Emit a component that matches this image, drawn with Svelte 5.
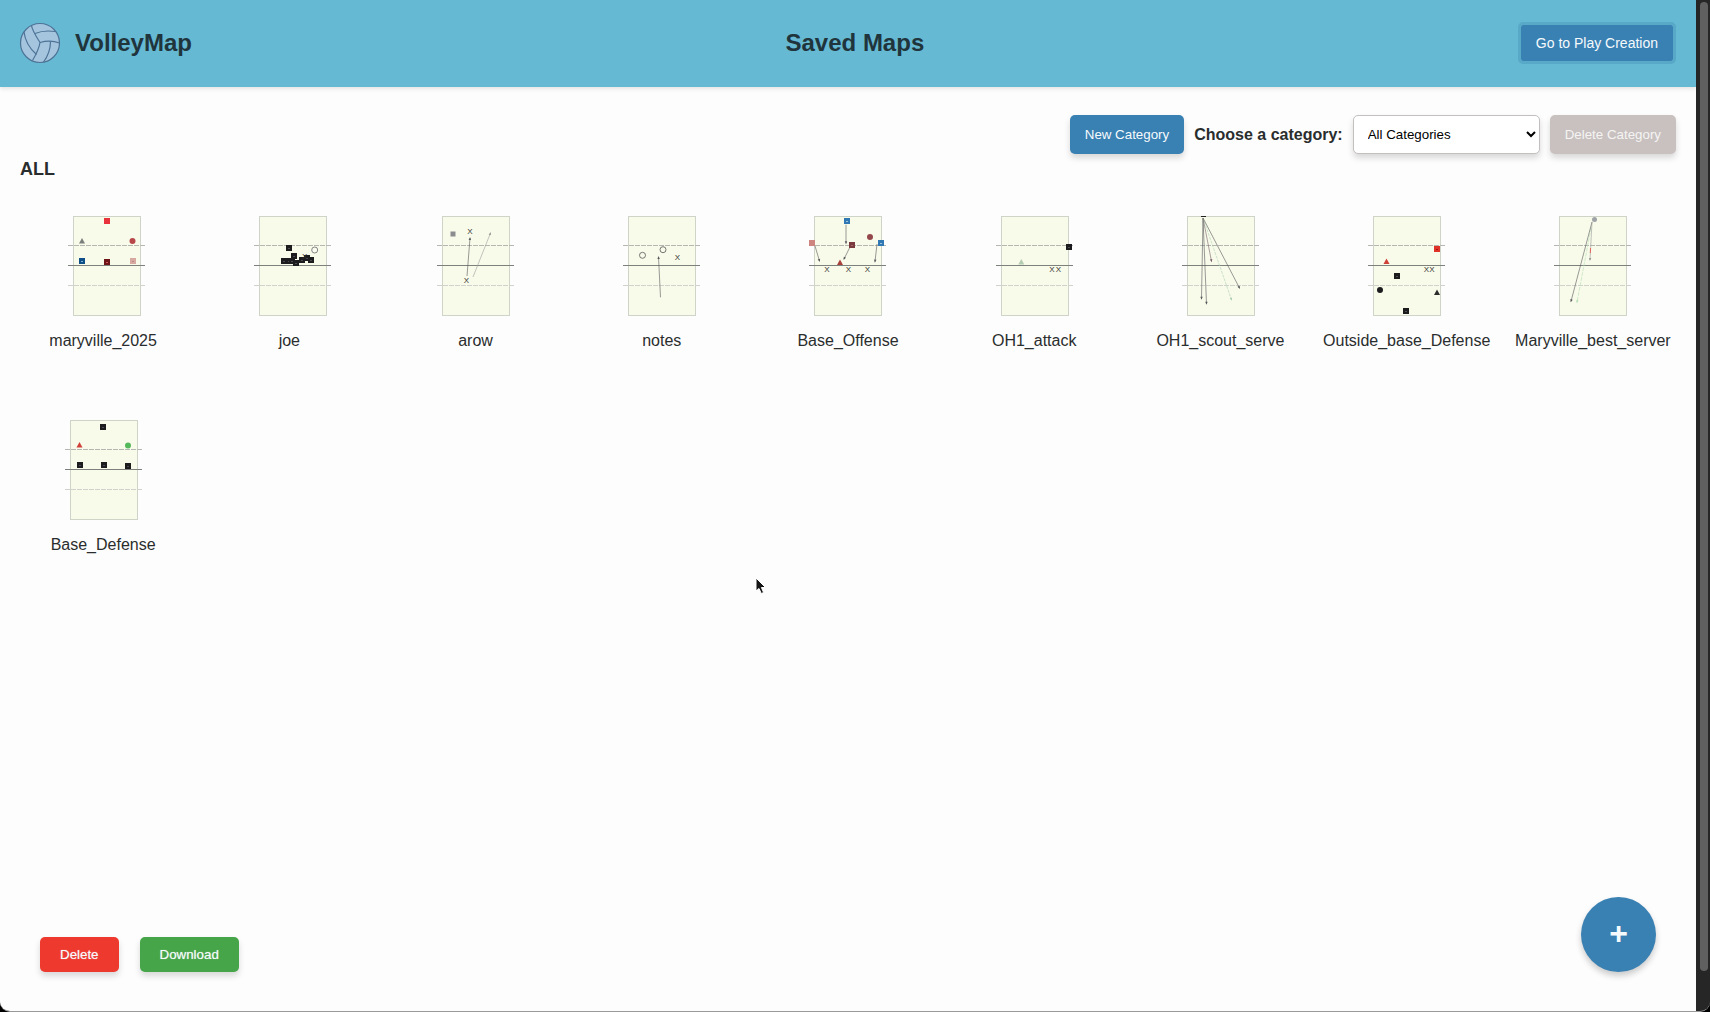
<script>
  const sq = (x, y, c = '#1c1c1e', s = 6, dot = '#4c4c50') => ({ t: 'sq', x, y, c, s, dot });
  const ci = (x, y, c, r = 3, stroke = 'none') => ({ t: 'ci', x, y, c, r, stroke });
  const tr = (x, y, c) => ({ t: 'tr', x, y, c });
  const xx = (x, y, c = '#333') => ({ t: 'x', x, y, c });
  const ar = (x, y, x2, y2, c = '#55585a', dash = 'none') => ({ t: 'ar', x, y, x2, y2, c, dash });

  const maps = [
    { name: 'maryville_2025', left: -10, items: [
      sq(34, 5, '#e8323c', 6, '#e8323c'), tr(9, 25, '#7b7f7c'), ci(59.500, 25, '#b8474a'),
      sq(9, 45, '#0d4f86', 6, '#7fb0d4'), sq(34, 46, '#6d1517', 6, '#c55'), sq(60, 45, '#d8a9a0', 6, '#b88')
    ] },
    { name: 'joe', left: -10, items: [
      sq(30, 32), sq(35, 40), sq(25, 45), sq(30, 45), sq(33, 45), sq(37, 47), sq(43, 44),
      sq(48, 42), sq(52, 44), xx(45.7, 40), ci(55.7, 34, '#fbfcf0', 3, '#666')
    ] },
    { name: 'arow', left: -7, items: [
      sq(11, 18, '#8b8c90', 5, '#8b8c90'), xx(28, 15.3), xx(24.500, 63.7),
      ar(25, 60, 28, 22), ar(31, 61, 48.500, 17, '#9a9d98')
    ] },
    { name: 'notes', left: -7, items: [
      ci(14.500, 39.3, 'none', 3, '#555'), ci(35, 33.7, 'none', 3, '#555'), xx(49.500, 40.7),
      ar(32.500, 81.3, 30.500, 41)
    ] },
    { name: 'Base_Offense', left: -7, items: [
      ar(32, 8.7, 32, 27.3), ar(1, 30, 5.500, 45), ar(36, 31, 30, 43), ar(63, 28, 61, 45.7),
      sq(33, 5, '#2f78b4', 6, '#9cc4e0'), ci(56, 21, '#94474a'), sq(67, 27, '#2f78b4', 6, '#9cc4e0'),
      sq(-2, 27, '#ce857f', 6, '#ce857f'), sq(38, 29, '#7a3a3e', 6, '#a66'), tr(26, 46.500, '#a8403c'),
      xx(13, 52.7), xx(34.500, 52.7), xx(53.500, 52.7)
    ] },
    { name: 'OH1_attack', left: -7, items: [
      sq(68, 31), tr(20.3, 46, '#b4ccb2'), xx(51, 52.7), xx(57.500, 52.7)
    ] },
    { name: 'OH1_scout_serve', left: -7, items: [
      ar(16, 2, 14.500, 82.7), ar(16, 2, 19.500, 87.7), ar(16, 2, 24.500, 45.3, '#75606a'),
      ar(16, 2, 44.500, 83.7, '#a9cdb2', '3 1'), ar(16, 2, 52.500, 72), { t: 'bar', x: 14, y: 0 }
    ] },
    { name: 'Outside_base_Defense', left: -7, items: [
      sq(64, 33, '#e03228', 6, '#a11'), tr(13.500, 45.500, '#cf4038'), xx(53.500, 52.7), xx(59, 52.7),
      sq(24, 60), ci(7, 74, '#1c1c1e'), tr(64, 76.500, '#2b2c2c'), sq(33, 95)
    ] },
    { name: 'Maryville_best_server', left: -7, items: [
      ar(32, 12, 18, 86.3, '#b2dcb6', '4 1'), ar(33, 6, 12, 85.3), ar(33, 6, 31, 44, '#999'),
      { t: 'seg', x: 31.500, y: 32, x2: 31.300, y2: 37 }, ci(35.500, 3.500, '#9fa3a8', 2.5)
    ] },
    { name: 'Base_Defense', left: -7, items: [
      sq(33, 7), tr(9.500, 25, '#cf4038'), ci(58, 25.500, '#55b95b'),
      sq(10, 45), sq(34, 45), sq(58, 46)
    ] }
  ];

  const angle = (m) => (Math.atan2(m.y2 - m.y, m.x2 - m.x) * 180) / Math.PI;
  let category = $state('all');
</script>

<div class="window">
  <div class="page">
    <header>
      <div class="brand">
        <svg class="ball" viewBox="0 0 40 40" aria-hidden="true">
          <circle cx="20" cy="20" r="19.5" />
          <path d="M11.5 2.5C12 7 14.500 11 20 19.500C19 26 17.500 29 12.500 37.500" />
          <path d="M15 10.500C21 8 28 7.500 35 8.500" />
          <path d="M20 19.500C27 17.500 33 17.500 39.500 20" />
          <path d="M30.500 18.200C30.500 26 28 33 23.500 39" />
          <path d="M4 9C5 17 9 25 16.500 31.500" />
        </svg>
        <span>VolleyMap</span>
      </div>
      <h1>Saved Maps</h1>
      <button class="go" type="button">Go to Play Creation</button>
    </header>

    <main>
      <div class="toolbar">
        <button class="action" type="button">New Category</button>
        <label for="category">Choose a category:</label>
        <select id="category" bind:value={category}>
          <option value="all">All Categories</option>
        </select>
        <button class="action off" type="button" disabled>Delete Category</button>
      </div>

      <h2>ALL</h2>

      <div class="maps">
        {#each maps as map}
          <figure>
            <svg class="court" viewBox="{map.left} 0 81 100" aria-hidden="true">
              <rect class="floor" x="0.5" y="0.5" width="67" height="99" />
              <path class="dashed" d="M-5 29.500H72" />
              <path class="net" d="M-5 49.500H72" />
              <path class="dashed light" d="M-5 69.500H72" />
              {#each map.items as m}
                {#if m.t === 'sq'}
                  <rect x={m.x - m.s / 2} y={m.y - m.s / 2} width={m.s} height={m.s} fill={m.c} />
                  <rect x={m.x - 1} y={m.y} width="2" height="1" fill={m.dot} />
                {:else if m.t === 'ci'}
                  <circle cx={m.x} cy={m.y} r={m.r} fill={m.c} stroke={m.stroke} stroke-width="0.8" />
                {:else if m.t === 'tr'}
                  <path d="M{m.x} {m.y - 3}l3 5.500h-6z" fill={m.c} />
                {:else if m.t === 'x'}
                  <text x={m.x} y={m.y + 3} fill={m.c}>X</text>
                {:else if m.t === 'bar'}
                  <rect x={m.x} y={m.y} width="5" height="1" fill="#222" />
                {:else if m.t === 'seg'}
                  <path d="M{m.x} {m.y}L{m.x2} {m.y2}" stroke="#e0665c" />
                {:else}
                  <path d="M{m.x} {m.y}L{m.x2} {m.y2}" stroke={m.c} stroke-width="0.6" stroke-dasharray={m.dash} />
                  <path d="M1 0L-2 1.200V-1.200z" fill={m.c} transform="translate({m.x2} {m.y2}) rotate({angle(m)})" />
                {/if}
              {/each}
            </svg>
            <figcaption>{map.name}</figcaption>
          </figure>
        {/each}
      </div>
    </main>

    <footer>
      <button class="delete" type="button">Delete</button>
      <button class="download" type="button">Download</button>
      <button class="add" type="button" aria-label="Add map">+</button>
    </footer>
  </div>
  <div class="scroll"><div class="thumb"></div></div>
</div>

<svg class="pointer" viewBox="0 0 12 18" aria-hidden="true">
  <path d="M1 1V14L4 11.500L6.300 16.500L8.600 15.500L6.400 10.500H10.500Z" />
</svg>

<style>
  :global(body) {
    background: #000;
    font-family: 'Liberation Sans', Arial, sans-serif;
    color: #2a2d2d;
  }
  .window {
    display: grid;
    grid-template-columns: 1fr 14px;
    min-height: 100vh;
    box-sizing: border-box;
    border-radius: 0 0 10px 10px;
    overflow: hidden;
    background: #262626;
    border-bottom: 1px solid #999;
  }
  .page {
    display: flex;
    flex-direction: column;
    background: #fdfdfd;
    min-width: 0;
  }
  header {
    display: flex;
    align-items: center;
    justify-content: space-between;
    height: 85px;
    padding: 0 20px 2px;
    background: #66b9d3;
    box-shadow: 0 2px 4px rgba(0, 0, 0, 0.1);
  }
  .brand {
    display: flex;
    align-items: center;
    gap: 15px;
    font-size: 24px;
    font-weight: bold;
    color: #20343c;
  }
  .ball {
    width: 40px;
    height: 40px;
    overflow: visible;
    fill: none;
    stroke: #4d7396;
    stroke-width: 1.2;
  }
  .ball circle {
    fill: #a5c5df;
  }
  h1 {
    margin: 0;
    font-size: 24px;
    color: #20343c;
  }
  button,
  select {
    font-family: inherit;
  }
  button {
    border: 0;
    color: #f5fafc;
    background: #3980b3;
  }
  .go {
    font-size: 14px;
    padding: 10px 15px;
    line-height: 16px;
    border: 3px solid #58a8c7;
    border-radius: 5px;
    background-clip: padding-box;
  }
  main {
    flex: 1;
    padding-top: 28px;
  }
  .toolbar {
    display: flex;
    justify-content: flex-end;
    align-items: center;
    gap: 10px;
    padding: 0 20px;
  }
  .toolbar label {
    font-size: 16px;
    font-weight: bold;
  }
  .action,
  select {
    height: 39px;
    border-radius: 5px;
    box-shadow: 0 4px 6px rgba(0, 0, 0, 0.15);
  }
  .action {
    padding: 0 15px;
  }
  .off {
    background: #c8c1c0;
    color: #f5f4f3;
  }
  select {
    width: 187px;
    padding: 0 0 0 10px;
    border: 1px solid #c4bfbf;
    background: #fff;
    color: #000;
  }
  h2 {
    margin: 5px 20px 37px;
    font-size: 18px;
    line-height: 20px;
  }
  .maps {
    display: grid;
    grid-template-columns: repeat(auto-fill, minmax(150px, 1fr));
    gap: 69px 20px;
    padding: 0 20px;
  }
  figure {
    display: flex;
    flex-direction: column;
    align-items: center;
    gap: 15px;
    margin: 0;
  }
  .court {
    width: 81px;
    height: 100px;
    overflow: visible;
  }
  .floor {
    fill: #f9fbea;
    stroke: #cfd4c8;
  }
  .net {
    stroke: #7d817c;
  }
  .dashed {
    stroke: #b4b8b0;
    stroke-dasharray: 5 1;
  }
  .light {
    stroke: #d0d3cb;
  }
  .court text {
    font-size: 8px;
    text-anchor: middle;
  }
  figcaption {
    font-size: 16px;
    line-height: 20px;
    white-space: nowrap;
  }
  footer {
    display: flex;
    align-items: flex-end;
    gap: 21px;
    padding: 0 40px 39px;
  }
  .delete,
  .download {
    height: 35px;
    padding: 0 20px;
    border-radius: 5px;
    box-shadow: 0 4px 6px rgba(0, 0, 0, 0.15);
    text-shadow: 0 0 1px rgba(255, 255, 255, 0.6);
  }
  .delete {
    background: #ee392f;
  }
  .download {
    background: #45a548;
  }
  .add {
    width: 75px;
    height: 75px;
    margin-left: auto;
    padding: 0 0 2px;
    border-radius: 50%;
    font-size: 32px;
    font-weight: bold;
    box-shadow: 0 4px 6px rgba(0, 0, 0, 0.2);
  }
  .scroll {
    padding: 2px 2px 40px 4px;
    display: flex;
  }
  .thumb {
    flex: 1;
    border-radius: 4px;
    background: #606060;
  }
  .pointer {
    position: absolute;
    left: 755px;
    top: 577px;
    width: 12px;
    height: 18px;
    fill: #151515;
    stroke: #fff;
    stroke-width: 1;
  }
</style>
